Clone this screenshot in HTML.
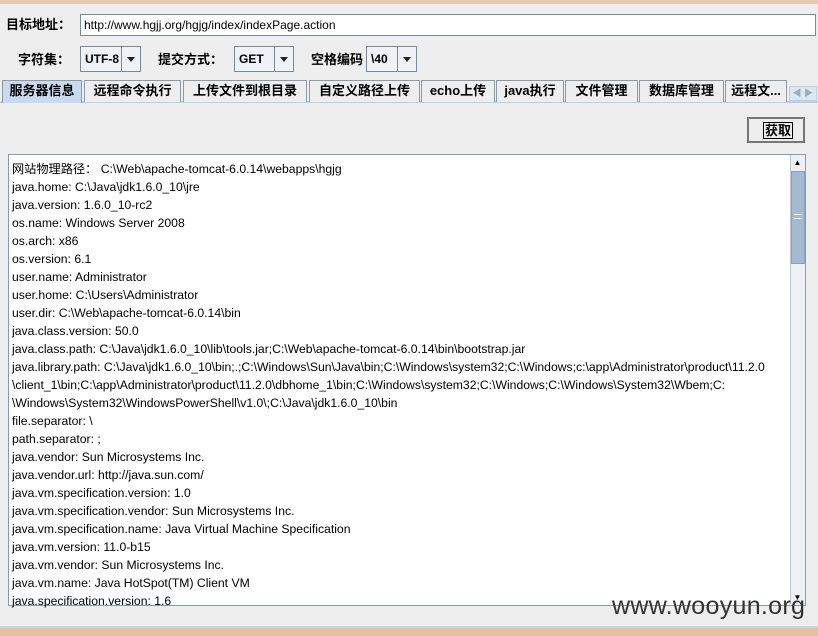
<!DOCTYPE html>
<html><head><meta charset="utf-8"><style>
*{margin:0;padding:0;box-sizing:border-box}
body{width:818px;height:636px;background:#eeeeee;position:relative;overflow:hidden;font-family:"Liberation Sans","Noto Sans CJK SC",sans-serif;font-size:12px;color:#000}
.a{position:absolute}
.lbl{font-weight:bold;font-size:13px}
.box{border:1px solid #7a8a99;background:#fff}
.combo{border:1px solid #7a8a99;background:#eef2f7;height:26px}
.combo span{position:absolute;left:4px;top:5px;font-weight:bold;font-size:12px}
.combo i{position:absolute;right:0;top:0;width:19px;height:24px;border-left:1px solid #7a8a99;background:#eef2f7}
.combo i:after{content:"";position:absolute;left:5px;top:10px;border-left:4px solid transparent;border-right:4px solid transparent;border-top:5px solid #222}
.tab{position:absolute;top:80px;height:22px;border:1px solid #8a9aa9;border-bottom:none;background:#eeeeee;font-weight:bold;font-size:13px;text-align:center;line-height:20px}
.txt div{height:18px;line-height:18px;white-space:nowrap;font-size:12.2px}
</style></head><body>
<div class="a" style="left:0;top:0;width:818px;height:4px;background:#e7c9ad"></div>
<div class="a" style="left:0;top:628px;width:818px;height:8px;background:#e4c0a0"></div>
<div class="a" style="left:0;top:626px;width:818px;height:2px;background:#c9d4df"></div>
<div class="a lbl" style="left:6px;top:14px">目标地址：</div>
<div class="a box" style="left:80px;top:14px;width:736px;height:22px"><span class="a" style="left:3px;top:3px;font-size:12px">http://www.hgjj.org/hgjg/index/indexPage.action</span></div>
<div class="a lbl" style="left:18px;top:49px">字符集：</div>
<div class="a combo" style="left:80px;top:46px;width:61px"><span>UTF-8</span><i></i></div>
<div class="a lbl" style="left:158px;top:49px">提交方式：</div>
<div class="a combo" style="left:234px;top:46px;width:60px"><span>GET</span><i></i></div>
<div class="a lbl" style="left:311px;top:49px">空格编码</div>
<div class="a combo" style="left:366px;top:46px;width:51px"><span>\40</span><i></i></div>
<div class="a" style="left:0;top:101px;width:818px;height:2px;background:#b8cfe5"></div>
<div class="tab" style="left:2px;width:80px;background:#c8daf0;height:23px">服务器信息</div>
<div class="tab" style="left:84px;width:97px">远程命令执行</div>
<div class="tab" style="left:183px;width:124px">上传文件到根目录</div>
<div class="tab" style="left:309px;width:111px">自定义路径上传</div>
<div class="tab" style="left:421px;width:74px">echo上传</div>
<div class="tab" style="left:496px;width:68px">java执行</div>
<div class="tab" style="left:565px;width:73px">文件管理</div>
<div class="tab" style="left:639px;width:85px">数据库管理</div>
<div class="tab" style="left:725px;width:62px">远程文...</div>
<div class="a" style="left:789px;top:86px;width:28px;height:15px;border:1px solid #b8cfe5;background:#dde7f2;font-size:9px;color:#9ab;line-height:13px">&nbsp;◀&nbsp;▶</div>
<div class="a" style="left:747px;top:117px;width:58px;height:26px;border:2px solid #777;background:#eee"><span class="a" style="left:14px;top:3px;border:1px solid #000;font-weight:bold;font-size:13px;line-height:15px;padding:0 1px">获取</span></div>
<div class="a" style="left:8px;top:154px;width:798px;height:452px;border:1px solid #8a9aa9;background:#fff"></div>
<div class="a" style="left:790px;top:155px;width:15px;height:450px;background:#eef0f3;border-left:1px solid #c0c8d0"></div>
<div class="a" style="left:790px;top:155px;width:15px;height:15px;font-size:8px;text-align:center;line-height:15px">▲</div>
<div class="a" style="left:791px;top:171px;width:14px;height:93px;background:#a4bad3;border:1px solid #8aa0bb"></div>
<div class="a" style="left:794px;top:214px;width:8px;height:5px;border-top:1px solid #fff;border-bottom:1px solid #fff"></div>
<div class="a" style="left:790px;top:590px;width:15px;height:15px;font-size:8px;text-align:center;line-height:15px">▼</div>
<div class="a txt" style="left:12px;top:160px">
<div>网站物理路径： C:\Web\apache-tomcat-6.0.14\webapps\hgjg</div>
<div>java.home: C:\Java\jdk1.6.0_10\jre</div>
<div>java.version: 1.6.0_10-rc2</div>
<div>os.name: Windows Server 2008</div>
<div>os.arch: x86</div>
<div>os.version: 6.1</div>
<div>user.name: Administrator</div>
<div>user.home: C:\Users\Administrator</div>
<div>user.dir: C:\Web\apache-tomcat-6.0.14\bin</div>
<div>java.class.version: 50.0</div>
<div>java.class.path: C:\Java\jdk1.6.0_10\lib\tools.jar;C:\Web\apache-tomcat-6.0.14\bin\bootstrap.jar</div>
<div>java.library.path: C:\Java\jdk1.6.0_10\bin;.;C:\Windows\Sun\Java\bin;C:\Windows\system32;C:\Windows;c:\app\Administrator\product\11.2.0</div>
<div>\client_1\bin;C:\app\Administrator\product\11.2.0\dbhome_1\bin;C:\Windows\system32;C:\Windows;C:\Windows\System32\Wbem;C:</div>
<div>\Windows\System32\WindowsPowerShell\v1.0\;C:\Java\jdk1.6.0_10\bin</div>
<div>file.separator: \</div>
<div>path.separator: ;</div>
<div>java.vendor: Sun Microsystems Inc.</div>
<div>java.vendor.url: http://java.sun.com/</div>
<div>java.vm.specification.version: 1.0</div>
<div>java.vm.specification.vendor: Sun Microsystems Inc.</div>
<div>java.vm.specification.name: Java Virtual Machine Specification</div>
<div>java.vm.version: 11.0-b15</div>
<div>java.vm.vendor: Sun Microsystems Inc.</div>
<div>java.vm.name: Java HotSpot(TM) Client VM</div>
<div>java.specification.version: 1.6</div>
</div>
<div class="a" style="left:612px;top:592px;font-size:25px;color:#333;letter-spacing:0.3px">www.wooyun.org</div>
</body></html>
